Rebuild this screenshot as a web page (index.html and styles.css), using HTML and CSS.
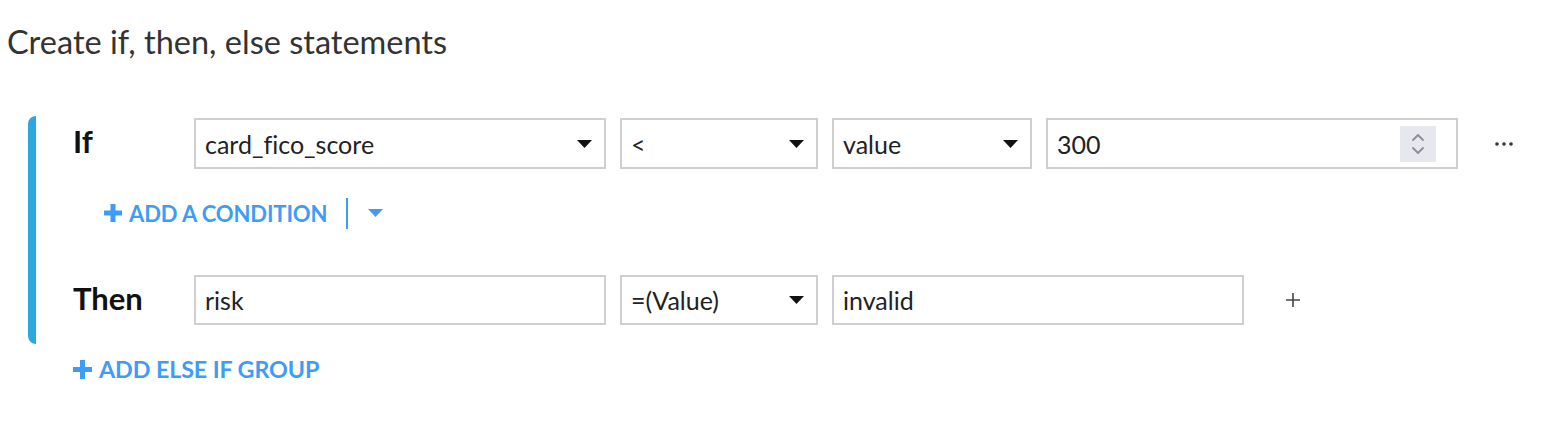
FILE: index.html
```html
<!DOCTYPE html>
<html lang="en">
<head>
  <meta charset="UTF-8" />
  <title>Create if, then, else statements</title>
  <link rel="stylesheet" href="styles.css">
</head>
<body>
  <h2 class="title">Create if, then, else statements</h2>

  <div class="group">
    <div class="row row-if">
      <div class="label">If</div>
      <div class="field select wide">
        <span>card_fico_score</span>
        <svg class="caret" width="15" height="8" viewBox="0 0 15 8"><path d="M0 0H15L7.5 8Z" fill="#111"/></svg>
      </div>
      <div class="field select narrow">
        <span>&lt;</span>
        <svg class="caret" width="15" height="8" viewBox="0 0 15 8"><path d="M0 0H15L7.5 8Z" fill="#111"/></svg>
      </div>
      <div class="field select mid">
        <span>value</span>
        <svg class="caret" width="15" height="8" viewBox="0 0 15 8"><path d="M0 0H15L7.5 8Z" fill="#111"/></svg>
      </div>
      <div class="field number wide">
        <span>300</span>
        <div class="spinner">
          <svg width="14" height="26" viewBox="0 0 14 26">
            <path d="M2 9L7 4L12 9" fill="none" stroke="#8c8c9a" stroke-width="1.8" stroke-linecap="round" stroke-linejoin="round"/>
            <path d="M2 17L7 22L12 17" fill="none" stroke="#8c8c9a" stroke-width="1.8" stroke-linecap="round" stroke-linejoin="round"/>
          </svg>
        </div>
      </div>
      <div class="more">
        <svg width="18" height="4" viewBox="0 0 18 4"><circle cx="2" cy="2" r="1.8" fill="#333"/><circle cx="9" cy="2" r="1.8" fill="#333"/><circle cx="16" cy="2" r="1.8" fill="#333"/></svg>
      </div>
    </div>

    <div class="add-condition">
      <span class="link">
        <svg class="plus" width="20" height="20" viewBox="0 0 20 20"><path d="M10 1V19M1 10H19" stroke="#3f9cf4" stroke-width="5"/></svg>
        ADD A CONDITION
      </span>
      <span class="divider"></span>
      <svg class="link-caret" width="15" height="8" viewBox="0 0 15 8"><path d="M0 0H15L7.5 8Z" fill="#3f9cf4"/></svg>
    </div>

    <div class="row row-then">
      <div class="label">Then</div>
      <div class="field wide">
        <span>risk</span>
      </div>
      <div class="field select narrow">
        <span>=(Value)</span>
        <svg class="caret" width="15" height="8" viewBox="0 0 15 8"><path d="M0 0H15L7.5 8Z" fill="#111"/></svg>
      </div>
      <div class="field wide">
        <span>invalid</span>
      </div>
      <div class="add">
        <svg width="16" height="16" viewBox="0 0 16 16"><path d="M8 1V15M1 8H15" stroke="#444" stroke-width="1.6"/></svg>
      </div>
    </div>
  </div>

  <div class="add-group">
    <span class="link link-group">
      <svg class="plus" width="21" height="21" viewBox="0 0 21 21"><path d="M10.5 1V20M1 10.5H20" stroke="#3f9cf4" stroke-width="5"/></svg>
      ADD ELSE IF GROUP
    </span>
  </div>
</body>
</html>
```

FILE: styles.css
```css
* {
  box-sizing: border-box;
  margin: 0;
  padding: 0;
}

body {
  font-family: Lato, 'Noto Sans', sans-serif;
  font-variant-ligatures: none;
  background: #fff;
  color: #333;
}

.title {
  font-size: 32.5px;
  font-weight: 400;
  color: #333;
  padding: 23px 0 0 7px;
  line-height: 38px;
}

.group {
  margin: 55px 0 0 28px;
  border-left: 8px solid #2aa8df;
  border-radius: 8px 0 0 8px;
  padding: 2px 0 19px 37px;
}

.row {
  display: flex;
  align-items: center;
  gap: 14px;
}

.label {
  width: 107px;
  font-size: 31px;
  font-weight: 700;
  color: #111;
  margin-bottom: 5px;
}

.field {
  height: 51px;
  border: 2px solid #cfcfcf;
  display: flex;
  align-items: center;
  justify-content: space-between;
  padding: 0 12px 0 9px;
  font-size: 25px;
  color: #222;
  background: #fff;
}

.wide {
  width: 412px;
}

.narrow {
  width: 198px;
}

.mid {
  width: 200px;
}

.number {
  padding-right: 20px;
}

.spinner {
  width: 36px;
  height: 36px;
  background: #e7e7ee;
  display: flex;
  align-items: center;
  justify-content: center;
}

.more {
  margin-left: 23px;
  display: flex;
  align-items: center;
}

.add {
  margin-left: 27px;
  display: flex;
  align-items: center;
}

.row-then .field {
  height: 50px;
}

.add-condition {
  display: flex;
  align-items: center;
  margin: 28px 0 0 30px;
  height: 32px;
}

.link {
  display: flex;
  align-items: center;
  gap: 6px;
  color: #3f9cf4;
  font-size: 22px;
  font-weight: 700;
  letter-spacing: -0.1px;
}

.link-group {
  font-size: 23.3px;
}

.divider {
  width: 2px;
  height: 31px;
  background: #3f9cf4;
  margin: 0 20px 0 19px;
}

.row-then {
  margin-top: 46px;
}

.add-group {
  margin: 11px 0 0 72px;
}
```
